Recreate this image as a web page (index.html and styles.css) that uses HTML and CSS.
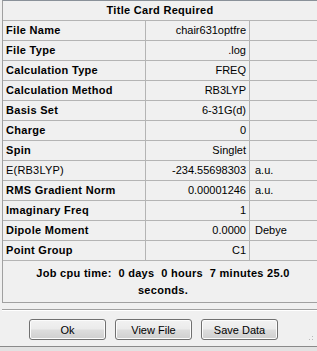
FILE: index.html
```html
<!DOCTYPE html>
<html>
<head>
  <title>Title Card</title>
  <link rel="stylesheet" href="styles.css">
</head>
<body>
  <div class="card">
    <div class="card-title">Title Card Required</div>
    <div class="grid">
      <div class="label">File Name</div><div class="value">chair631optfre</div><div class="unit"></div>
      <div class="label">File Type</div><div class="value">.log</div><div class="unit"></div>
      <div class="label">Calculation Type</div><div class="value">FREQ</div><div class="unit"></div>
      <div class="label">Calculation Method</div><div class="value">RB3LYP</div><div class="unit"></div>
      <div class="label">Basis Set</div><div class="value">6-31G(d)</div><div class="unit"></div>
      <div class="label">Charge</div><div class="value">0</div><div class="unit"></div>
      <div class="label">Spin</div><div class="value">Singlet</div><div class="unit"></div>
      <div class="label plain">E(RB3LYP)</div><div class="value">-234.55698303</div><div class="unit">a.u.</div>
      <div class="label">RMS Gradient Norm</div><div class="value">0.00001246</div><div class="unit">a.u.</div>
      <div class="label">Imaginary Freq</div><div class="value">1</div><div class="unit"></div>
      <div class="label">Dipole Moment</div><div class="value">0.0000</div><div class="unit">Debye</div>
      <div class="label">Point Group</div><div class="value">C1</div><div class="unit"></div>
    </div>
    <div class="cpu-time">Job cpu time:&nbsp; 0 days&nbsp; 0 hours&nbsp; 7 minutes 25.0<br>seconds.</div>
  </div>

  <div class="separator"></div>

  <div class="buttons">
    <button class="btn">Ok</button>
    <button class="btn">View File</button>
    <button class="btn">Save Data</button>
    <div class="grip"></div>
  </div>

  <div class="status-bar"></div>
</body>
</html>
```

FILE: styles.css
```css
body {
  margin: 0;
  padding: 0;
  width: 317px;
  height: 351px;
  overflow: hidden;
  font-family: "Liberation Sans", Arial, sans-serif;
  font-size: 11px;
  color: #000;
  background-color: #f0f0f0;
}

.card {
  margin-left: 2px;
  border-top: 1px solid #8a9199;
  border-left: 1px solid #a0a0a0;
  border-bottom: 1px solid #a0a0a0;
}

.card-title {
  height: 19px;
  line-height: 19px;
  text-align: center;
  font-weight: bold;
  letter-spacing: 0.3px;
  border-bottom: 1px solid #b4b4b4;
}

.grid {
  display: grid;
  grid-template-columns: 143px 104px 1fr;
}

.grid > div {
  height: 19px;
  line-height: 19px;
  border-bottom: 1px solid #b4b4b4;
  white-space: nowrap;
  overflow: hidden;
}

.label {
  padding-left: 3px;
  font-weight: bold;
  letter-spacing: 0.3px;
  border-right: 1px solid #b4b4b4;
}

.label.plain {
  font-weight: normal;
  letter-spacing: 0.2px;
}

.value {
  padding-right: 3px;
  text-align: right;
  border-right: 1px solid #b4b4b4;
}

.unit {
  padding-left: 5px;
}

.cpu-time {
  height: 41px;
  padding-top: 4px;
  box-sizing: border-box;
  text-align: center;
  font-weight: bold;
  letter-spacing: 0.3px;
  line-height: 17px;
  padding-left: 6px;
}

.separator {
  margin: 6px 0 0 2px;
  height: 1px;
  background-color: #a0a0a0;
  border-bottom: 1px solid #ffffff;
}

.buttons {
  position: relative;
  display: flex;
  gap: 9px;
  padding: 8px 0 0 29px;
  height: 27px;
}

.btn {
  width: 77px;
  height: 21px;
  padding: 0;
  font-family: "Liberation Sans", Arial, sans-serif;
  font-size: 11px;
  color: #000;
  border: 1px solid #707070;
  border-radius: 3px;
  background: linear-gradient(to bottom, #f2f2f2 0%, #ebebeb 48%, #dddddd 52%, #cfcfcf 100%);
  box-shadow: inset 0 0 0 1px #fcfcfc;
}

.grip {
  position: absolute;
  right: 2px;
  bottom: 4px;
  width: 10px;
  height: 10px;
  background:
    radial-gradient(circle, #b8b8b8 0.8px, transparent 1px) 0 0 / 3px 3px;
  clip-path: polygon(100% 0, 100% 100%, 0 100%);
}

.status-bar {
  height: 6px;
  border-top: 1px solid #8a8a8a;
  background-color: #e2e2e2;
}
```
